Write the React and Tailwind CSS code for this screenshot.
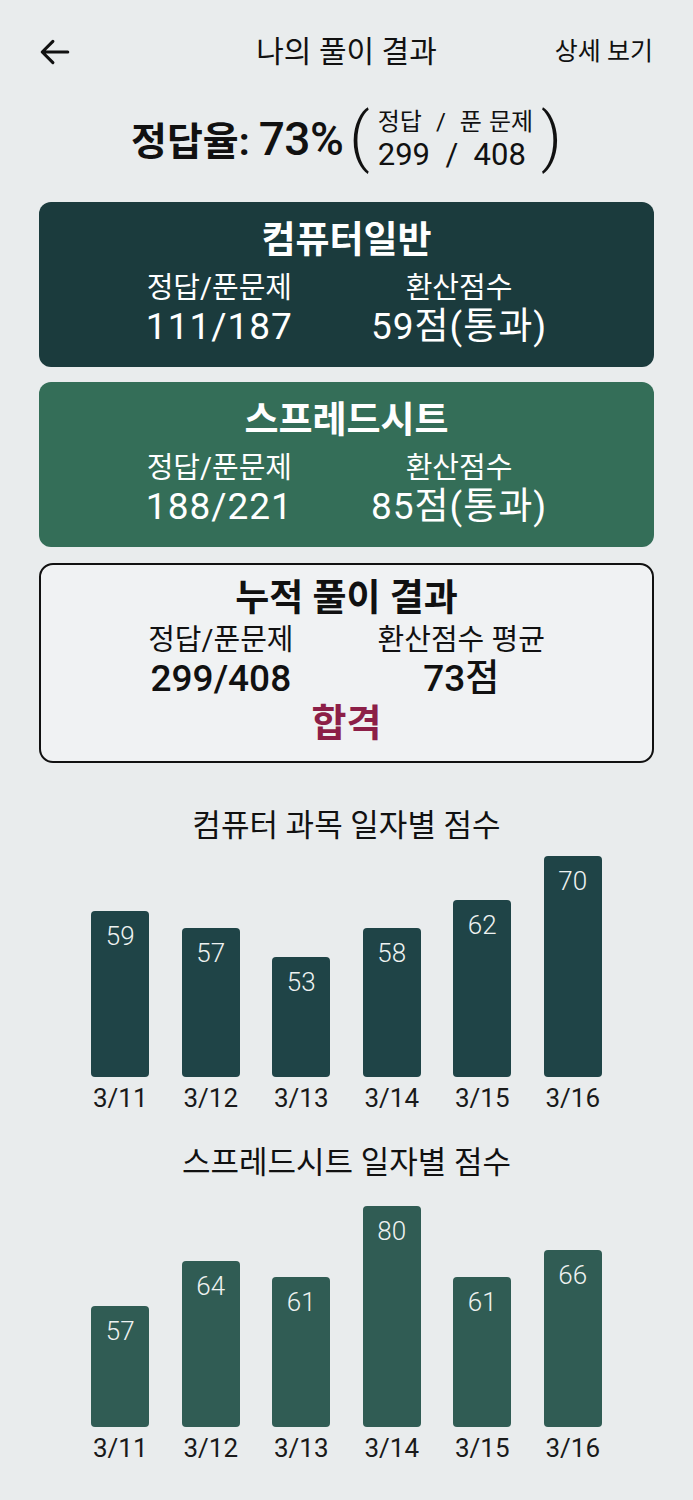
import React from 'react'

const font = { fontFamily: 'Roboto, "Noto Sans CJK KR", "Noto Sans", sans-serif' }

const computerScores = [
  { date: '3/11', score: 59, h: 166 },
  { date: '3/12', score: 57, h: 149 },
  { date: '3/13', score: 53, h: 120 },
  { date: '3/14', score: 58, h: 149 },
  { date: '3/15', score: 62, h: 177 },
  { date: '3/16', score: 70, h: 221 },
]

const sheetScores = [
  { date: '3/11', score: 57, h: 121 },
  { date: '3/12', score: 64, h: 166 },
  { date: '3/13', score: 61, h: 150 },
  { date: '3/14', score: 80, h: 221 },
  { date: '3/15', score: 61, h: 150 },
  { date: '3/16', score: 66, h: 177 },
]

function SubjectCard({ title, bg, solved, score }) {
  return (
    <div className={`mx-[39px] h-[165px] rounded-[12px] ${bg} pt-[18px] text-white`}>
      <div className="text-center text-[37px] font-bold leading-[42px]">{title}</div>
      <div className="mt-[8px] flex justify-center gap-[78px]">
        <div className="flex flex-col items-center">
          <div className="text-[29px] leading-[36px]">정답/푼문제</div>
          <div className="text-[37px] font-normal leading-[42px] tracking-[1px]">{solved}</div>
        </div>
        <div className="flex flex-col items-center">
          <div className="text-[29px] leading-[36px]">환산점수</div>
          <div className="text-[37px] font-normal leading-[42px] tracking-[1px]">{score}</div>
        </div>
      </div>
    </div>
  )
}

function BarChart({ data, barColor }) {
  return (
    <div className="mx-[75px]">
      <div className="grid h-[221px] grid-cols-6 items-end">
        {data.map((d) => (
          <div key={d.date} className="flex justify-center">
            <div
              className={`w-[58px] rounded-[4px] ${barColor} pt-[10px] text-center text-[26px] font-light leading-[30px] text-[#eef2f1]`}
              style={{ height: d.h }}
            >
              {d.score}
            </div>
          </div>
        ))}
      </div>
      <div className="mt-[6px] grid grid-cols-6">
        {data.map((d) => (
          <div key={d.date} className="text-center text-[26px] leading-[30px] text-[#1a1a1a]">
            {d.date}
          </div>
        ))}
      </div>
    </div>
  )
}

export default function App() {
  return (
    <div className="min-h-screen bg-[#e9eced] text-[#111]" style={font}>
      {/* header */}
      <div className="grid h-[104px] grid-cols-[1fr_auto_1fr] items-center px-[38px]">
        <div>
          <svg width="34" height="34" viewBox="0 0 24 24" fill="none" stroke="#111" strokeWidth="2.2" strokeLinecap="round" strokeLinejoin="round">
            <path d="M21 12H3.5M10.5 4.5 3 12l7.5 7.5" />
          </svg>
        </div>
        <div className="text-[30px] leading-[40px]">나의 풀이 결과</div>
        <div className="pr-[2px] text-right text-[25px] leading-[34px]">상세 보기</div>
      </div>

      {/* summary */}
      <div className="mb-[26px] flex h-[72px] items-center justify-center">
        <div className="flex items-baseline font-bold">
          <span className="text-[39px] leading-[50px]">정답율:</span>
          <span className="ml-[9px] text-[46px] font-medium leading-[50px] tracking-[-0.5px]">73%</span>
        </div>
        <div className="ml-[6px] -mt-[4px] text-[64px] font-light leading-[68px]">(</div>
        <div className="mx-[8px] flex flex-col">
          <div className="flex text-[24px] leading-[30px]">
            <span>정답</span>
            <span className="mx-[14px]">/</span>
            <span>푼</span>
            <span className="ml-[7px]">문제</span>
          </div>
          <div className="text-[31px] leading-[36px]">299&nbsp;&nbsp;/&nbsp;&nbsp;408</div>
        </div>
        <div className="-mt-[4px] text-[64px] font-light leading-[68px]">)</div>
      </div>

      <SubjectCard title="컴퓨터일반" bg="bg-[#1b3b3d]" solved="111/187" score="59점(통과)" />
      <div className="h-[15px]" />
      <SubjectCard title="스프레드시트" bg="bg-[#346e58]" solved="188/221" score="85점(통과)" />

      {/* total */}
      <div className="mx-[39px] mt-[16px] h-[200px] rounded-[14px] border-2 border-[#111] bg-[#f0f2f3] pt-[13px]">
        <div className="text-center text-[37px] font-bold leading-[42px]">누적 풀이 결과</div>
        <div className="mt-[2px] flex justify-center gap-[84px]">
          <div className="flex flex-col items-center">
            <div className="text-[29px] leading-[36px]">정답/푼문제</div>
            <div className="text-[37px] font-medium leading-[42px]">299/408</div>
          </div>
          <div className="flex flex-col items-center">
            <div className="text-[29px] leading-[36px]">환산점수 평균</div>
            <div className="text-[37px] font-medium leading-[42px]">73점</div>
          </div>
        </div>
        <div className="mt-[2px] text-center text-[38px] font-bold leading-[42px] text-[#8c1f47]">합격</div>
      </div>

      {/* charts */}
      <div className="mt-[42px] text-center text-[31px] leading-[42px]">컴퓨터 과목 일자별 점수</div>
      <div className="mt-[9px]">
        <BarChart data={computerScores} barColor="bg-[#1f4447]" />
      </div>

      <div className="mt-[29px] text-center text-[31px] leading-[42px]">스프레드시트 일자별 점수</div>
      <div className="mt-[22px]">
        <BarChart data={sheetScores} barColor="bg-[#305c54]" />
      </div>
    </div>
  )
}
